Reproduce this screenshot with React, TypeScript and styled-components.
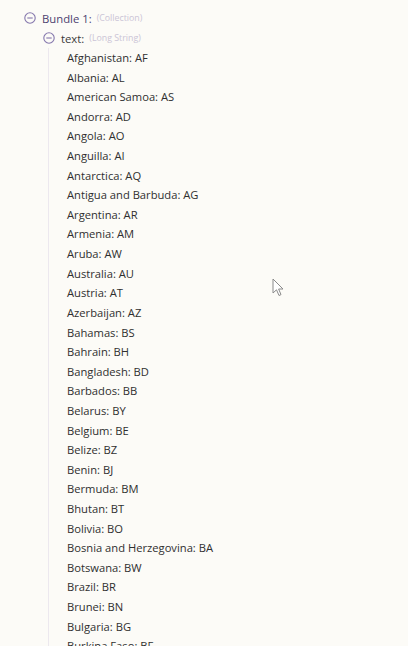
import React from "react";
import styled, { createGlobalStyle } from "styled-components";

const Global = createGlobalStyle`
  html, body { margin: 0; padding: 0; background: #fcfbf7; }
  body { font-family: "Open Sans", "Noto Sans", sans-serif; overflow: hidden; }
`;

const Page = styled.div`
  position: relative;
  width: 408px;
  height: 646px;
  overflow: hidden;
  background: #fcfbf7;
  padding: 8px 0 0 24px;
  box-sizing: border-box;
`;

const Node = styled.div`
  display: flex;
  flex-direction: column;
`;

const Header = styled.div`
  display: flex;
  align-items: center;
  height: 20px;
  gap: 6px;
`;

const Label = styled.span<{ $color: string }>`
  font-size: 11.3px;
  color: ${(p) => p.$color};
  white-space: nowrap;
`;

const TypeHint = styled.span`
  font-size: 8.8px;
  color: #cbc4d6;
  margin-left: -1px;
  white-space: nowrap;
`;

const Children = styled.div<{ $indent: number }>`
  display: flex;
  flex-direction: column;
  margin-left: ${(p) => p.$indent}px;
`;

const ItemList = styled.div`
  display: flex;
  flex-direction: column;
  margin-left: 5px;
  padding-left: 18px;
  border-left: 1px solid #ece8ee;
`;

const Item = styled.div`
  height: 19.62px;
  line-height: 19.62px;
  font-size: 11.2px;
  color: #2f2f2f;
  white-space: nowrap;
`;

const Cursor = styled.svg`
  position: absolute;
  left: 272px;
  top: 278px;
`;

const Toggle = () => (
  <svg width="12" height="12" viewBox="0 0 12 12">
    <circle cx="6" cy="6" r="5.2" fill="none" stroke="#8577ad" strokeWidth="1.1" />
    <line x1="3.3" y1="6" x2="8.7" y2="6" stroke="#8577ad" strokeWidth="1.1" />
  </svg>
);

const countries = [
  "Afghanistan: AF",
  "Albania: AL",
  "American Samoa: AS",
  "Andorra: AD",
  "Angola: AO",
  "Anguilla: AI",
  "Antarctica: AQ",
  "Antigua and Barbuda: AG",
  "Argentina: AR",
  "Armenia: AM",
  "Aruba: AW",
  "Australia: AU",
  "Austria: AT",
  "Azerbaijan: AZ",
  "Bahamas: BS",
  "Bahrain: BH",
  "Bangladesh: BD",
  "Barbados: BB",
  "Belarus: BY",
  "Belgium: BE",
  "Belize: BZ",
  "Benin: BJ",
  "Bermuda: BM",
  "Bhutan: BT",
  "Bolivia: BO",
  "Bosnia and Herzegovina: BA",
  "Botswana: BW",
  "Brazil: BR",
  "Brunei: BN",
  "Bulgaria: BG",
  "Burkina Faso: BF",
];

export default function App() {
  return (
    <>
      <Global />
      <Page>
        <Node>
          <Header>
            <Toggle />
            <Label $color="#4d4270">Bundle 1:</Label>
            <TypeHint>(Collection)</TypeHint>
          </Header>
          <Children $indent={19}>
            <Node>
              <Header>
                <Toggle />
                <Label $color="#3a3a3a">text:</Label>
                <TypeHint>(Long String)</TypeHint>
              </Header>
              <ItemList>
                {countries.map((c) => (
                  <Item key={c}>{c}</Item>
                ))}
              </ItemList>
            </Node>
          </Children>
        </Node>
        <Cursor width="12" height="20" viewBox="0 0 12 20">
          <path
            d="M1 1 L1 15 L4.5 11.8 L7 17.5 L9 16.6 L6.6 11 L11 11 Z"
            fill="#ffffff"
            stroke="#8a8a8a"
            strokeWidth="1"
            strokeLinejoin="round"
          />
        </Cursor>
      </Page>
    </>
  );
}
